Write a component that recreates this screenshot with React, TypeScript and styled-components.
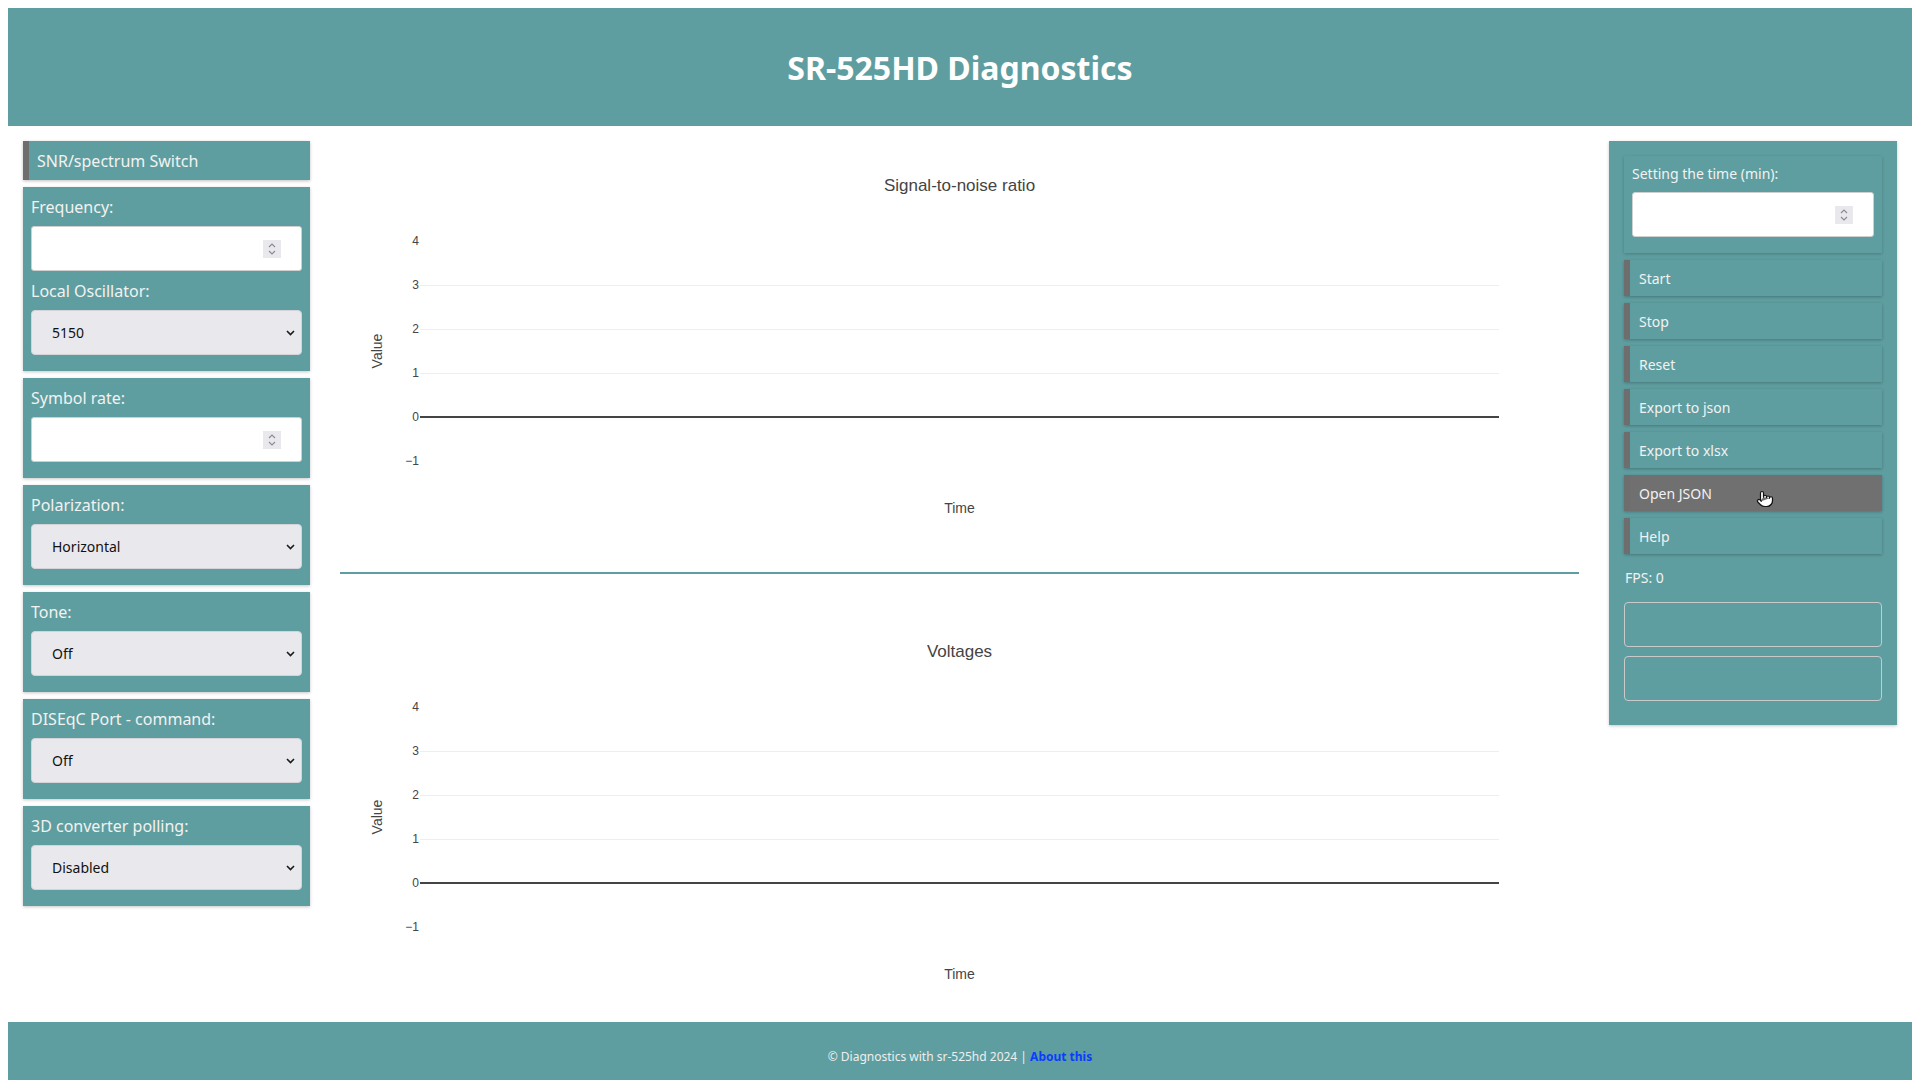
import React from "react";
import styled, { createGlobalStyle } from "styled-components";
import { Pointer } from "lucide-react";

const TEAL = "#5f9ea0";
const EDGE = "#6e6e6e";

const Global = createGlobalStyle`
  html { scrollbar-width: none; }
  html::-webkit-scrollbar { display: none; }
  body {
    margin: 8px;
    font-family: "Noto Sans", "Open Sans", sans-serif;
    background: #fff;
  }
  * { box-sizing: border-box; }
`;

const Header = styled.header`
  background: ${TEAL};
  height: 118px;
  display: flex;
  align-items: center;
  justify-content: center;
`;

const Title = styled.h1`
  margin: 0;
  color: #fff;
  font-size: 32px;
  font-weight: 700;
`;

const Main = styled.main`
  display: grid;
  grid-template-columns: 287px 1fr 288px;
  column-gap: 30px;
  padding: 15px 15px 15px;
  align-items: start;
`;

const Column = styled.div`
  display: flex;
  flex-direction: column;
  gap: 7px;
`;

const Shadowed = styled.div`
  background: ${TEAL};
  box-shadow: 0 1px 3px rgba(0, 0, 0, 0.22);
`;

const SideButton = styled.div<{ $height: number; $size: number; $hover?: boolean }>`
  position: relative;
  height: ${(p) => p.$height}px;
  display: flex;
  align-items: center;
  background: ${(p) => (p.$hover ? "#707070" : TEAL)};
  border-left: 6px solid ${EDGE};
  box-shadow: 0 1px 3px rgba(0, 0, 0, 0.25);
  color: #f2f2f2;
  font-size: ${(p) => p.$size}px;
  padding-left: ${(p) => (p.$size > 15 ? 8 : 9)}px;
`;

const Card = styled(Shadowed)<{ $top?: number }>`
  padding: ${(p) => p.$top ?? 8}px 8px 16px;
`;

const Label = styled.label<{ $size?: number; $gap?: number }>`
  display: block;
  color: #f2f2f2;
  font-size: ${(p) => p.$size ?? 16}px;
  line-height: 24px;
  margin-top: ${(p) => p.$gap ?? 0}px;
  margin-bottom: ${(p) => (p.$size && p.$size < 16 ? 6 : 7)}px;
`;

const FieldBox = styled.div`
  height: 45px;
  background: #fff;
  border: 1px solid #cfcfcf;
  border-radius: 3px;
  display: flex;
  align-items: center;
  padding-right: 20px;
`;

const NumberInput = styled.input`
  flex: 1;
  min-width: 0;
  border: none;
  outline: none;
  background: transparent;
  font: 14px "Noto Sans", sans-serif;
  padding-left: 12px;
  height: 100%;
`;

const Spinner = styled.div`
  width: 18px;
  height: 18px;
  background: #e9e9ed;
  display: flex;
  align-items: center;
  justify-content: center;
`;

const SelectWrap = styled.div`
  position: relative;
  height: 45px;
`;

const Select = styled.select`
  appearance: none;
  width: 100%;
  height: 100%;
  background: #e9e9ed;
  border: 1px solid #d4d4d8;
  border-radius: 4px;
  color: #111;
  font: 14px "Noto Sans", sans-serif;
  padding-left: 20px;
  outline: none;
`;

const Chevron = styled.svg`
  position: absolute;
  right: 7px;
  top: 50%;
  margin-top: -3px;
  pointer-events: none;
`;

const Center = styled.div`
  display: flex;
  flex-direction: column;
`;

const ChartSvg = styled.svg`
  display: block;
  width: 100%;
  height: 400px;
  font-family: "Liberation Sans", Arial, sans-serif;
`;

const Divider = styled.div`
  height: 2px;
  background: ${TEAL};
  margin: 31px 0 33px;
`;

const RightPanel = styled(Shadowed)`
  padding: 15px 15px 24px;
  display: flex;
  flex-direction: column;
  gap: 7px;
`;

const Fps = styled.div`
  color: #f2f2f2;
  font-size: 14px;
  line-height: 24px;
  padding-left: 1px;
  margin: 5px 0 5px;
`;

const OutlineBox = styled.div`
  height: 45px;
  border: 1px solid #c9c9c9;
  border-radius: 4px;
  & + & {
    margin-top: 2px;
  }
`;

const Cursor = styled.span`
  position: absolute;
  left: 126px;
  top: 15px;
  display: flex;
  pointer-events: none;
`;

const Footer = styled.footer`
  background: ${TEAL};
  color: #eee;
  font-size: 12px;
  line-height: 18px;
  text-align: center;
  padding: 26px 0 30px;
`;

const FooterLink = styled.a`
  color: #0a3cff;
  font-weight: 700;
  text-decoration: none;
`;

const SpinIcon = () => (
  <svg width="10" height="14" viewBox="0 0 10 14">
    <path d="M2 5 L5 2 L8 5" fill="none" stroke="#8b8b94" strokeWidth="1.2" />
    <path d="M2 9 L5 12 L8 9" fill="none" stroke="#8b8b94" strokeWidth="1.2" />
  </svg>
);

const NumberField = () => (
  <FieldBox>
    <NumberInput type="text" />
    <Spinner>
      <SpinIcon />
    </Spinner>
  </FieldBox>
);

const SelectField = ({ value }: { value: string }) => (
  <SelectWrap>
    <Select defaultValue={value}>
      <option>{value}</option>
    </Select>
    <Chevron width="9" height="6" viewBox="0 0 9 6">
      <path d="M1 1 L4.5 4.5 L8 1" fill="none" stroke="#1a1a1a" strokeWidth="1.6" />
    </Chevron>
  </SelectWrap>
);

const W = 1239;
const ticks = [
  { v: "4", y: 100 },
  { v: "3", y: 144 },
  { v: "2", y: 188 },
  { v: "1", y: 232 },
  { v: "0", y: 276 },
  { v: "\u22121", y: 320 },
];

const Chart = ({ title }: { title: string }) => (
  <ChartSvg viewBox={`0 0 ${W} 400`} preserveAspectRatio="none">
    <text x={W / 2} y={44} textAnchor="middle" dominantBaseline="central" fontSize="17" fill="#444">
      {title}
    </text>
    {[144, 188, 232].map((y) => (
      <line key={y} x1={80} x2={W - 80} y1={y + 0.5} y2={y + 0.5} stroke="#eee" strokeWidth="1" />
    ))}
    <line x1={80} x2={W - 80} y1={276} y2={276} stroke="#444" strokeWidth="2" />
    {ticks.map((t) => (
      <text key={t.v} x={79} y={t.y} textAnchor="end" dominantBaseline="central" fontSize="12" fill="#444">
        {t.v}
      </text>
    ))}
    <text
      x={37}
      y={210}
      transform="rotate(-90 37 210)"
      textAnchor="middle"
      dominantBaseline="central"
      fontSize="14"
      fill="#444"
    >
      Value
    </text>
    <text x={W / 2} y={367} textAnchor="middle" dominantBaseline="central" fontSize="14" fill="#444">
      Time
    </text>
  </ChartSvg>
);

const actions = ["Start", "Stop", "Reset", "Export to json", "Export to xlsx", "Open JSON", "Help"];

export default function App() {
  return (
    <>
      <Global />
      <Header>
        <Title>SR-525HD Diagnostics</Title>
      </Header>
      <Main>
        <Column>
          <SideButton $height={39} $size={16}>
            SNR/spectrum Switch
          </SideButton>
          <Card>
            <Label>Frequency:</Label>
            <NumberField />
            <Label $gap={8}>Local Oscillator:</Label>
            <SelectField value="5150" />
          </Card>
          <Card>
            <Label>Symbol rate:</Label>
            <NumberField />
          </Card>
          <Card>
            <Label>Polarization:</Label>
            <SelectField value="Horizontal" />
          </Card>
          <Card>
            <Label>Tone:</Label>
            <SelectField value="Off" />
          </Card>
          <Card>
            <Label>DISEqC Port - command:</Label>
            <SelectField value="Off" />
          </Card>
          <Card>
            <Label>3D converter polling:</Label>
            <SelectField value="Disabled" />
          </Card>
        </Column>
        <Center>
          <Chart title="Signal-to-noise ratio" />
          <Divider />
          <Chart title="Voltages" />
        </Center>
        <RightPanel>
          <Card $top={6}>
            <Label $size={14}>Setting the time (min):</Label>
            <NumberField />
          </Card>
          {actions.map((a) => (
            <SideButton key={a} $height={36} $size={14} $hover={a === "Open JSON"}>
              {a}
              {a === "Open JSON" && (
                <Cursor>
                  <Pointer size={18} color="#111" fill="#fff" strokeWidth={1.6} />
                </Cursor>
              )}
            </SideButton>
          ))}
          <Fps>FPS: 0</Fps>
          <OutlineBox />
          <OutlineBox />
        </RightPanel>
      </Main>
      <Footer>
        © Diagnostics with sr-525hd 2024 | <FooterLink href="#">About this</FooterLink>
      </Footer>
    </>
  );
}
